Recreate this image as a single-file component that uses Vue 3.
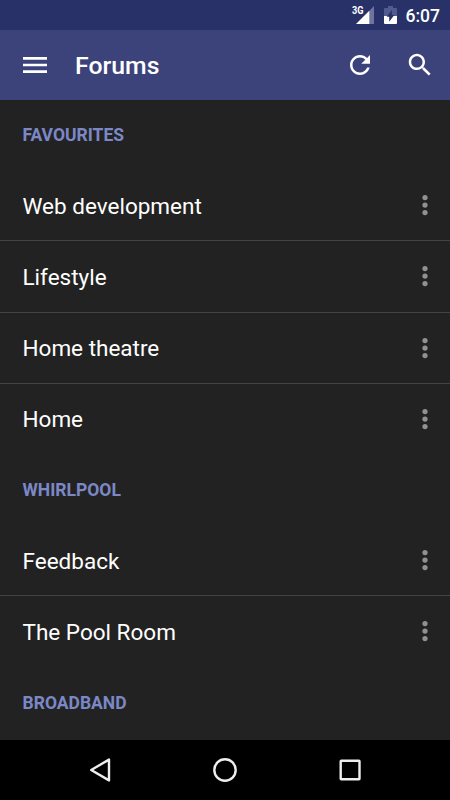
<script setup>
const sections = [
  { title: 'Favourites', forums: ['Web development', 'Lifestyle', 'Home theatre', 'Home'] },
  { title: 'Whirlpool', forums: ['Feedback', 'The Pool Room'] },
  { title: 'Broadband', forums: [] },
]
</script>

<template>
  <div class="screen">
    <div class="status">
      <svg class="signal" width="24" height="26" viewBox="-1 -5 24 26">
        <path d="M22 0V18H4.5Z" fill="#6d749f" />
        <path d="M17.3 4.7V18H4Z" fill="#fff" />
        <rect width="12.5" height="9" fill="#283268" />
        <text class="net" x="0" y="8.2" textLength="11.5" lengthAdjust="spacingAndGlyphs">3G</text>
      </svg>
      <svg class="battery" width="13" height="18" viewBox="0 0 13 18">
        <path d="M4 0H9V2H12Q13 2 13 3V10H0V3Q0 2 1 2H4Z" fill="#535b8c" />
        <path d="M0 10H13V17Q13 18 12 18H1Q0 18 0 17Z" fill="#fff" />
        <path d="M7.8 4V9H10.3L5.2 15.7V10.8H2.7Z" fill="#283268" />
      </svg>
      <span class="clock">6:07</span>
    </div>

    <header class="toolbar">
      <svg class="menu" width="32" height="32" viewBox="0 0 24 24">
        <path d="M3 18h18v-2H3v2zm0-5h18v-2H3v2zm0-7v2h18V6H3z" fill="#fff" />
      </svg>
      <h1>Forums</h1>
      <svg width="30" height="30" viewBox="0 0 24 24">
        <path d="M17.65 6.35C16.2 4.9 14.21 4 12 4c-4.42 0-7.99 3.58-7.99 8s3.57 8 7.99 8c3.73 0 6.84-2.55 7.73-6h-2.08c-.82 2.33-3.04 4-5.65 4-3.31 0-6-2.69-6-6s2.69-6 6-6c1.66 0 3.14.69 4.22 1.78L13 11h7V4l-2.35 2.35z" fill="#fff" />
      </svg>
      <svg class="search" width="30" height="30" viewBox="0 0 24 24">
        <path d="M15.5 14h-.79l-.28-.27C15.41 12.59 16 11.11 16 9.5 16 5.91 13.09 3 9.5 3S3 5.91 3 9.5 5.91 16 9.5 16c1.61 0 3.09-.59 4.23-1.57l.27.28v.79l5 4.99L20.49 19l-4.99-5zm-6 0C7.01 14 5 11.99 5 9.5S7.01 5 9.5 5 14 7.01 14 9.5 11.99 14 9.5 14z" fill="#fff" />
      </svg>
    </header>

    <main class="list">
      <section v-for="s in sections" :key="s.title">
        <h2>{{ s.title }}</h2>
        <div v-for="f in s.forums" :key="f" class="row">
          <span>{{ f }}</span>
          <svg width="30" height="30" viewBox="0 0 24 24" fill="#919191">
            <circle cx="12" cy="6" r="2.1" />
            <circle cx="12" cy="12" r="2.1" />
            <circle cx="12" cy="18" r="2.1" />
          </svg>
        </div>
      </section>
    </main>

    <nav class="navbar">
      <svg width="30" height="30" viewBox="0 0 30 30">
        <path d="M24 4.6V25.4L6.2 15Z" />
      </svg>
      <svg width="30" height="30" viewBox="0 0 30 30">
        <circle cx="15" cy="15" r="10.7" />
      </svg>
      <svg width="30" height="30" viewBox="0 0 30 30">
        <rect x="5.7" y="5.7" width="18.8" height="18.6" rx="0.6" />
      </svg>
    </nav>
  </div>
</template>

<style>
body {
  margin: 0;
  background: #222;
}
</style>

<style scoped>
.screen {
  width: 450px;
  height: 800px;
  display: flex;
  flex-direction: column;
  overflow: hidden;
  background: #222;
  color: #fff;
  font-family: Roboto, sans-serif;
}
svg {
  display: block;
  flex: none;
}
.status {
  flex: none;
  height: 30px;
  box-sizing: border-box;
  padding: 1px 10px 0 0;
  display: flex;
  justify-content: flex-end;
  align-items: flex-start;
  background: #283268;
}
.net {
  font-size: 10.5px;
  font-weight: 700;
  fill: #fff;
}
.battery {
  margin: 5px 9px 0 9px;
}
.clock {
  margin-top: 5px;
  font-size: 17.5px;
  font-weight: 500;
  line-height: 20px;
}
.toolbar {
  flex: none;
  height: 70px;
  box-sizing: border-box;
  padding: 0 15px 0 19px;
  display: flex;
  align-items: center;
  background: #3b437a;
}
h1 {
  flex: 1;
  margin: 2px 0 0 24px;
  font-size: 24.8px;
  font-weight: 500;
  line-height: 30px;
}
.search {
  margin-left: 30px;
}
.list {
  flex: 1;
  min-height: 0;
  overflow: hidden;
}
h2 {
  margin: 0;
  padding-left: 22.5px;
  height: 70px;
  line-height: 71.6px;
  font-size: 17.5px;
  font-weight: 700;
  text-transform: uppercase;
  color: #7c88c6;
}
.row {
  height: 71.25px;
  box-sizing: border-box;
  padding: 0 10px 0 22.5px;
  display: flex;
  align-items: center;
  justify-content: space-between;
  border-bottom: 1px solid #434343;
  font-size: 22.5px;
  line-height: 30px;
}
.row:last-child {
  border-bottom-color: transparent;
}
.row span {
  padding-top: 1px;
}
.navbar {
  flex: none;
  height: 60px;
  display: flex;
  align-items: center;
  justify-content: center;
  gap: 95px;
  background: #000;
}
.navbar path,
.navbar circle,
.navbar rect {
  fill: none;
  stroke: #eee;
  stroke-width: 2.4;
  stroke-linejoin: round;
}
</style>
